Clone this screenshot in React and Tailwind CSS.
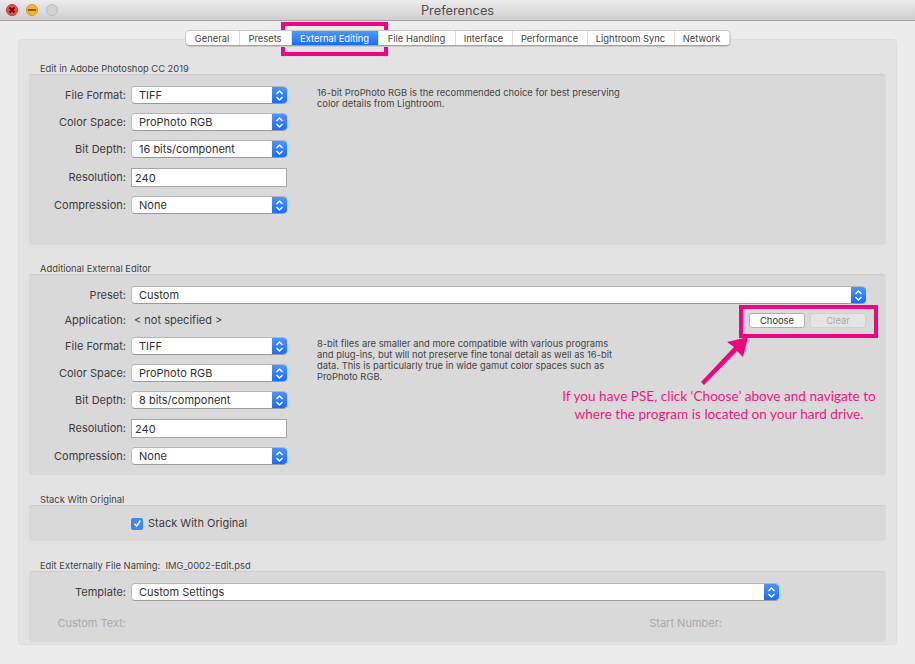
import React from 'react';

const tabs = [
    { name: 'General', width: 'w-[54px]' },
    { name: 'Presets', width: 'w-[52px]' },
    { name: 'External Editing', width: 'w-[87px]', active: true },
    { name: 'File Handling', width: 'w-[77px]' },
    { name: 'Interface', width: 'w-[57px]' },
    { name: 'Performance', width: 'w-[75px]' },
    { name: 'Lightroom Sync', width: 'w-[87px]' },
    { name: 'Network', width: 'w-[55px]' },
];

function Chevrons() {
    return (
        <svg width="9" height="13" viewBox="0 0 9 13" fill="none" stroke="white" strokeWidth="1.4">
            <path d="M1.5 5 L4.5 2 L7.5 5" />
            <path d="M1.5 8 L4.5 11 L7.5 8" />
        </svg>
    );
}

function Select({ value, width = 'w-[156px]' }) {
    return (
        <div className={`${width} h-[18px] flex rounded-[4px] bg-white border-b border-b-[#9b9b9b] border-t border-t-[#b5b5b5] border-l border-l-[#c0c0c0] overflow-hidden`}>
            <div className="flex-1 pl-[7px] text-[11px] leading-[16px] text-[#333333]">{value}</div>
            <div className="w-[15px] -my-px flex items-center justify-center bg-gradient-to-b from-[#4f97fb] to-[#0f69ff]">
                <Chevrons />
            </div>
        </div>
    );
}

function Row({ label, children, className = 'h-[18px]' }) {
    return (
        <div className={`flex items-center ${className}`}>
            <div className="w-[97px] mr-[5px] text-right text-[11px] text-[#3d3d3d]">{label}</div>
            {children}
        </div>
    );
}

function FormatFields({ depth }) {
    return (
        <div className="flex flex-col gap-[9px] w-[258px] shrink-0">
            <Row label="File Format:"><Select value="TIFF" /></Row>
            <Row label="Color Space:"><Select value="ProPhoto RGB" /></Row>
            <Row label="Bit Depth:"><Select value={depth} /></Row>
            <Row label="Resolution:" className="h-[20px]">
                <div className="w-[156px] h-[19px] bg-white border border-[#a8a8a8] pl-[3px] text-[11px] leading-[18px] text-[#333333]">240</div>
            </Row>
            <Row label="Compression:"><Select value="None" /></Row>
        </div>
    );
}

function Note({ children }) {
    return <p className="ml-[30px] w-[320px] pt-[1px] text-[9.4px] leading-[11px] text-[#444444]">{children}</p>;
}

function Group({ title, className, children, bodyClass }) {
    return (
        <div className={className}>
            <div className="h-[12px] pl-[11px] text-[9.35px] leading-[14px] text-[#444444]">{title}</div>
            <div className={`rounded-[3px] bg-[#d9d9d9] border-t border-t-[#cdcdcd] ${bodyClass}`}>{children}</div>
        </div>
    );
}

export default function App() {
    return (
        <div className="relative w-[915px] h-[664px] overflow-hidden bg-[#ececec] font-['Inter','Liberation_Sans',sans-serif]">
            {/* title bar */}
            <div className="relative h-[21px] flex items-center justify-center pt-[1px] bg-gradient-to-b from-[#ebebeb] to-[#cfcfcf] border-b border-b-[#a3a3a3]">
                <div className="absolute left-[6px] top-[4px] flex gap-[8px]">
                    <div className="w-[12px] h-[12px] rounded-full bg-[#f2494a] border border-[#d23a3a] flex items-center justify-center">
                        <svg width="8" height="8" viewBox="0 0 8 8" stroke="#5c0c0c" strokeWidth="1.8"><path d="M1.5 1.5 L6.5 6.5 M6.5 1.5 L1.5 6.5" /></svg>
                    </div>
                    <div className="w-[12px] h-[12px] rounded-full bg-[#f6b02c] border border-[#d8982a] flex items-center justify-center">
                        <div className="w-[8px] h-[2px] bg-[#8a5a08]" />
                    </div>
                    <div className="w-[12px] h-[12px] rounded-full bg-[#d2d2d2] border border-[#bcbcbc]" />
                </div>
                <span className="text-[12.8px] text-[#4f4f4f]">Preferences</span>
            </div>

            <div className="px-[18px]">
                {/* tabs */}
                <div className="relative z-10 mt-[10px] -mb-[7px] flex justify-center">
                    <div className="flex h-[15px] rounded-[4px] bg-white border-b border-b-[#a5a5a5] overflow-hidden shadow-[0_0_0_1px_#c8c8c8]">
                        {tabs.map((tab) => (
                            <div
                                key={tab.name}
                                className={`${tab.width} h-[15px] text-center text-[9.35px] leading-[15px] border-r border-r-[#dddddd] ${tab.active ? 'bg-gradient-to-b from-[#4f97fb] to-[#1169ff] text-white' : 'text-[#444444]'}`}
                            >
                                {tab.name}
                            </div>
                        ))}
                    </div>
                </div>

                {/* panel */}
                <div className="h-[606px] rounded-[4px] bg-[#e3e3e3] border border-[#dddddd] px-[10px] pt-[22px]">
                    <Group title="Edit in Adobe Photoshop CC 2019" bodyClass="h-[171px] pt-[11px] flex">
                        <FormatFields depth="16 bits/component" />
                        <Note>16-bit ProPhoto RGB is the recommended choice for best preserving<br />color details from Lightroom.</Note>
                    </Group>

                    <Group title="Additional External Editor" className="mt-[17px]" bodyClass="h-[201px] pt-[11px]">
                        <Row label="Preset:"><Select value="Custom" width="w-[735px]" /></Row>
                        <div className="flex items-center h-[15px] my-[9px]">
                            <div className="w-[97px] mr-[8px] text-right text-[11px] text-[#3d3d3d]">Application:</div>
                            <div className="flex-1 text-[11px] text-[#3d3d3d]">&lt; not specified &gt;</div>
                            <div className="w-[56px] h-[15px] rounded-[3px] bg-white border border-[#b0b0b0] text-center text-[9.35px] leading-[13px] text-[#333333]">Choose</div>
                            <div className="ml-[5px] mr-[20px] w-[56px] h-[15px] rounded-[3px] bg-[#e4e4e4] border border-[#d0d0d0] text-center text-[9.35px] leading-[13px] text-[#a8a8a8]">Clear</div>
                        </div>
                        <div className="flex">
                            <FormatFields depth="8 bits/component" />
                            <Note>8-bit files are smaller and more compatible with various programs<br />and plug-ins, but will not preserve fine tonal detail as well as 16-bit<br />data. This is particularly true in wide gamut color spaces such as<br />ProPhoto RGB.</Note>
                        </div>
                    </Group>

                    <Group title="Stack With Original" className="mt-[18px]" bodyClass="h-[36px] flex items-center pl-[102px]">
                        <div className="w-[12px] h-[12px] rounded-[2px] bg-[#3b86f7] flex items-center justify-center">
                            <svg width="9" height="9" viewBox="0 0 9 9" fill="none" stroke="white" strokeWidth="1.6"><path d="M1.5 4.8 L3.6 7 L7.5 1.5" /></svg>
                        </div>
                        <span className="ml-[5px] text-[11px] text-[#3d3d3d]">Stack With Original</span>
                    </Group>

                    <Group title="Edit Externally File Naming:  IMG_0002-Edit.psd" className="mt-[18px] whitespace-pre" bodyClass="h-[71px] pt-[11px]">
                        <Row label="Template:"><Select value="Custom Settings" width="w-[648px]" /></Row>
                        <div className="flex items-center h-[14px] mt-[15px] text-[11px] text-[#a9a9a9]">
                            <div className="w-[97px] text-right">Custom Text:</div>
                            <div className="w-[596px] text-right">Start Number:</div>
                        </div>
                    </Group>
                </div>
            </div>

            {/* pink annotations over the screenshot */}
            <div className="absolute left-[281px] top-[22px] w-[107px] h-[34px] border-4 border-[#f0047f]" />
            <div className="absolute left-[739px] top-[305px] w-[139px] h-[33px] border-4 border-[#f0047f]" />
            <svg className="absolute left-[695px] top-[330px]" width="60" height="60" viewBox="0 0 60 60" fill="#f0047f">
                <path d="M6 52 L9 55 L42 21 L48 27 L53 7 L32 12 L39 17 Z" />
            </svg>
            <div className="absolute left-[541px] top-[387px] w-[356px] text-center text-[13.6px] leading-[18px] text-[#f0187f] font-['Lato',sans-serif]">
                If you have PSE, click ‘Choose’ above and navigate to<br />where the program is located on your hard drive.
            </div>
        </div>
    );
}
